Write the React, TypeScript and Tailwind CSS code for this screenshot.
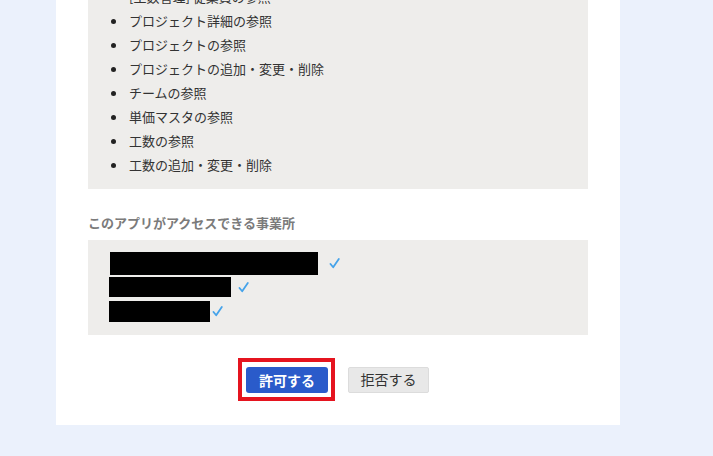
import React from "react";

const scopes = [
  "[工数管理] 従業員の参照",
  "プロジェクト詳細の参照",
  "プロジェクトの参照",
  "プロジェクトの追加・変更・削除",
  "チームの参照",
  "単価マスタの参照",
  "工数の参照",
  "工数の追加・変更・削除",
];

type Office = { redact: number; gap: number };

const offices: Office[] = [
  { redact: 208, gap: 11 },
  { redact: 122, gap: 7 },
  { redact: 101, gap: 2 },
];

const Check = () => (
  <svg width="11" height="11" viewBox="0 0 11 11" className="shrink-0">
    <path d="M1.5 6 L4.2 9.3 L9.8 1" fill="none" stroke="#45a3ea" strokeWidth="1.8" strokeLinecap="round" strokeLinejoin="round" />
  </svg>
);

export default function App() {
  return (
    <div className="h-[456px] overflow-hidden bg-[#ebf1fc] font-['Noto_Sans_CJK_JP','Noto_Sans',sans-serif] text-[#333]">
      <div className="ml-[56px] flex w-[564px] flex-col bg-white px-[32px] pb-[24px]">
        <ul className="-mt-[15px] bg-[#eeedeb] pb-[12px]">
          {scopes.map((s) => (
            <li key={s} className="flex h-[24px] items-center text-[13px]">
              <span className="ml-[23px] mr-[13px] h-[5px] w-[5px] rounded-full bg-[#222]" />
              {s}
            </li>
          ))}
        </ul>

        <div className="mt-[24px] mb-[7px] text-[13px] leading-[20px] font-bold text-[#7b7b7b]">
          このアプリがアクセスできる事業所
        </div>

        <div className="bg-[#eeedeb] pt-[11px] pb-[12px]">
          {offices.map((o, i) => (
            <div key={i} className="flex h-[24px] items-center">
              <span
                className={i === 0 ? "ml-[22px] h-[23px] bg-black" : i === 1 ? "ml-[21px] h-[20px] bg-black" : "ml-[21px] h-[21px] bg-black"}
                style={{ width: o.redact }}
              />
              <span style={{ marginLeft: o.gap }}>
                <Check />
              </span>
            </div>
          ))}
        </div>

        <div className="mt-[23px] flex items-center justify-center gap-[13px] pr-[9px]">
          <div className="border-[4px] border-[#e5141f] pt-[5px] pb-[4px] pl-[4px] pr-[3px]">
            <button className="flex h-[26px] w-[82px] items-center justify-center rounded-[3px] bg-[#2a5bca] text-[14px] font-bold text-white">
              許可する
            </button>
          </div>
          <button className="flex h-[26px] w-[81px] items-center justify-center rounded-[2px] border border-[#dcdcdc] bg-[#e8e8e8] text-[14px] text-[#333]">
            拒否する
          </button>
        </div>
      </div>
    </div>
  );
}
